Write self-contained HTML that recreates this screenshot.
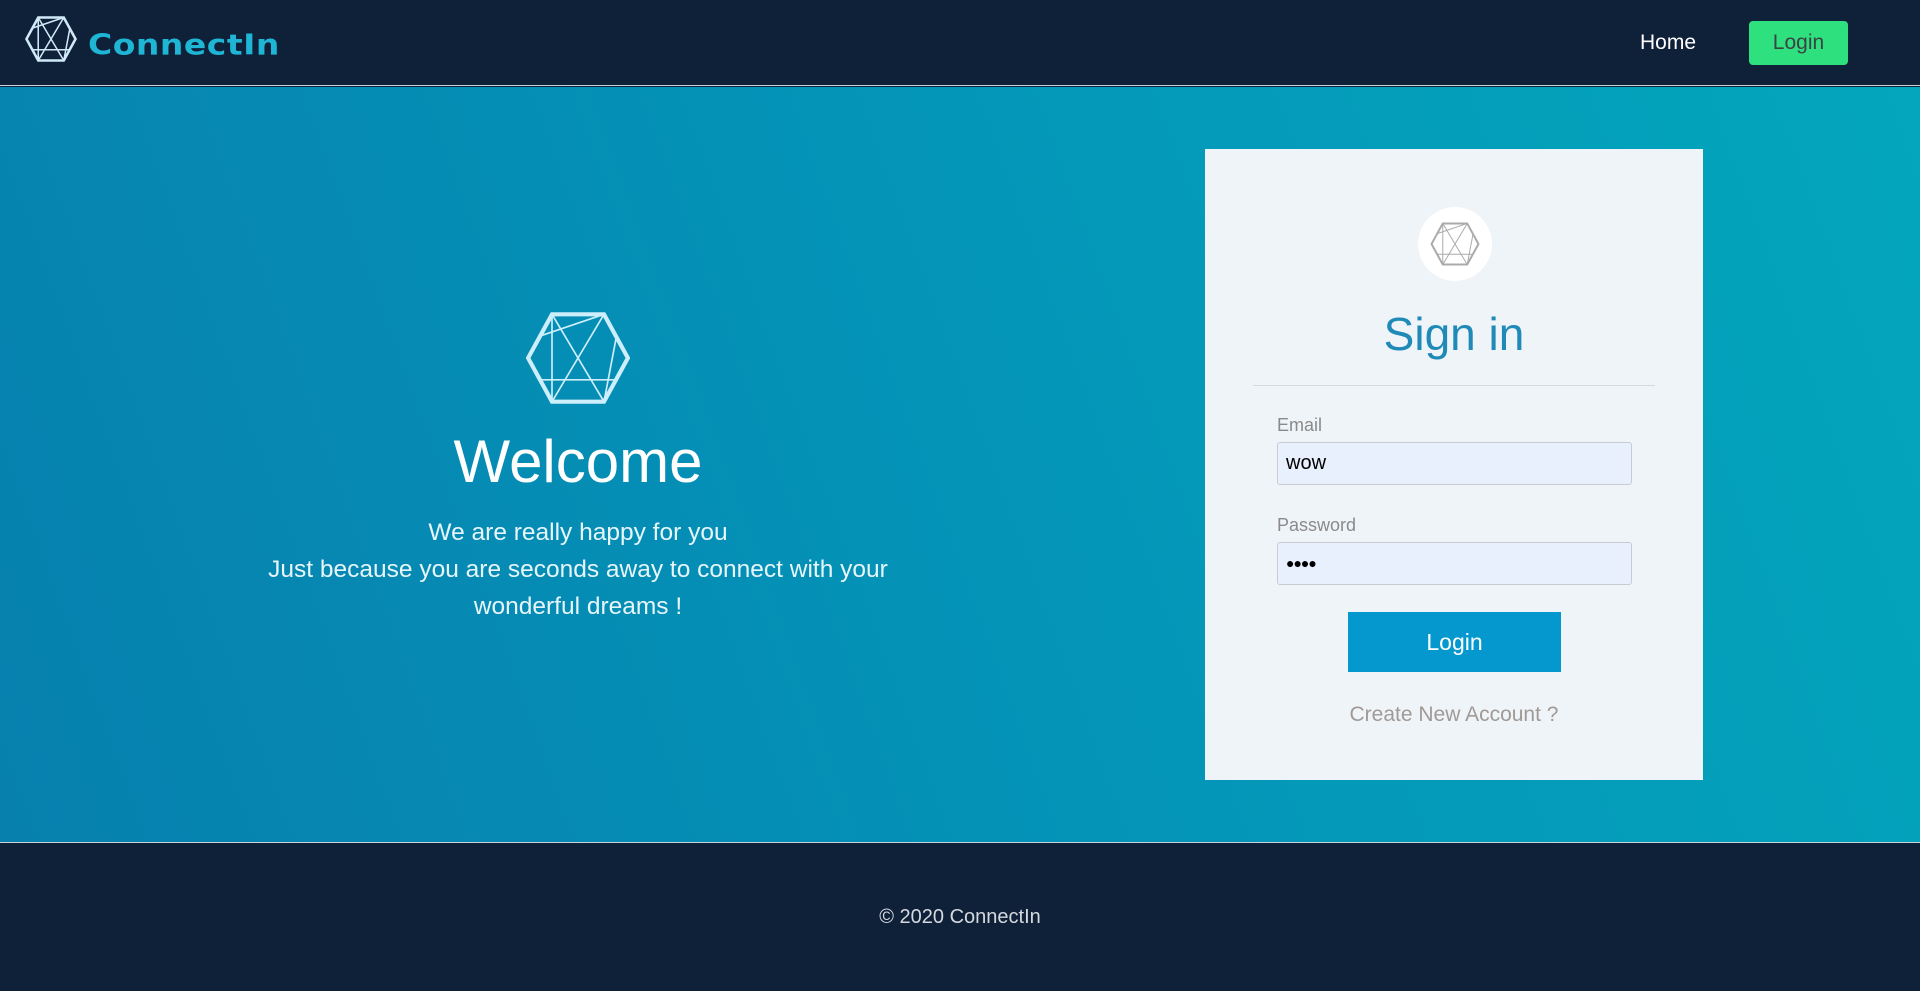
<!DOCTYPE html>
<html><head><meta charset="utf-8"><style>
*{margin:0;padding:0;box-sizing:border-box}
body{width:1920px;height:991px;overflow:hidden;font-family:"Liberation Sans",sans-serif;background:#0f2039;position:relative}
.hdr{position:absolute;left:0;top:0;width:1920px;height:86px;background:#0f2039;border-bottom:1px solid #c9d3dc}
.main{position:absolute;left:0;top:87px;width:1920px;height:756px;background:linear-gradient(70deg,#0780ae 0%,#0494b8 50%,#03a6bc 100%);border-bottom:1px solid #c9d3dc}
.ftr{position:absolute;left:0;top:844px;width:1920px;height:147px;background:#0f2039}
.abs{position:absolute}
</style></head><body>
<div class="hdr">
<svg class="abs" style="left:25px;top:16px" width="52" height="46" viewBox="0 0 100 90"><g fill="none" stroke="#cfe9f7" stroke-width="3"><polygon points="25,3 75,3 98,45 75,87 25,87 2,45" stroke-width="5"/><path d="M25,3 L75,87 M75,3 L25,87 M25,3 L25,87 M75,3 L13,24 M87,24 L75,87 M13,66 L87,66"/></g></svg>
<div class="abs" style="left:88px;top:28px;font-size:33px;color:#1fb6d6;letter-spacing:0.5px;font-family:'DejaVu Sans',sans-serif;font-weight:bold;transform:scaleY(0.85);transform-origin:left top">ConnectIn</div>
<div class="abs" style="left:1640px;top:31px;font-size:21px;color:#fff">Home</div>
<div class="abs" style="left:1749px;top:21px;width:99px;height:44px;background:#2ee07e;border-radius:4px;color:#3a4444;font-size:21px;text-align:center;line-height:44px">Login</div>
</div>
<div class="main">
<svg class="abs" style="left:526px;top:224px" width="104" height="94" viewBox="0 0 100 90"><g fill="none" stroke="#cdeefb" stroke-width="1.6"><polygon points="25,3 75,3 98,45 75,87 25,87 2,45" stroke-width="4"/><path d="M25,3 L75,87 M75,3 L25,87 M25,3 L25,87 M75,3 L13,24 M87,24 L75,87 M13,66 L87,66"/></g></svg>
<div class="abs" style="left:278px;top:340px;width:600px;text-align:center;font-size:60px;color:#fff">Welcome</div>
<div class="abs" style="left:178px;top:427px;width:800px;text-align:center;font-size:24.5px;line-height:37px;color:#e6f6fb">We are really happy for you<br>Just because you are seconds away to connect with your<br>wonderful dreams !</div>
<div class="abs" style="left:1205px;top:62px;width:498px;height:631px;background:#eff4f9">
<div class="abs" style="left:213px;top:58px;width:74px;height:74px;border-radius:50%;background:#fff"></div>
<svg class="abs" style="left:225px;top:73px" width="50" height="44" viewBox="0 0 100 90"><g fill="none" stroke="#aaa" stroke-width="2"><polygon points="25,3 75,3 98,45 75,87 25,87 2,45" stroke-width="4"/><path d="M25,3 L75,87 M75,3 L25,87 M25,3 L25,87 M75,3 L13,24 M87,24 L75,87 M13,66 L87,66"/></g></svg>
<div class="abs" style="left:0;top:158px;width:498px;text-align:center;font-size:46px;color:#1f8ab8">Sign in</div>
<div class="abs" style="left:48px;top:236px;width:402px;height:1px;background:#d5d9de"></div>
<div class="abs" style="left:72px;top:266px;font-size:18px;color:#8a8a8a">Email</div>
<div class="abs" style="left:72px;top:293px;width:355px;height:43px;background:#e8f0fe;border:1px solid #c8ccd0;border-radius:3px;font-size:20px;line-height:41px;padding-left:8px;color:#000">wow</div>
<div class="abs" style="left:72px;top:366px;font-size:18px;color:#8a8a8a">Password</div>
<div class="abs" style="left:72px;top:393px;width:355px;height:43px;background:#e8f0fe;border:1px solid #c8ccd0;border-radius:3px;font-size:14px;line-height:41px;padding-left:8px;color:#000;letter-spacing:-1px">●●●●</div>
<div class="abs" style="left:143px;top:463px;width:213px;height:60px;background:#0498cf;color:#fff;font-size:23px;text-align:center;line-height:60px">Login</div>
<div class="abs" style="left:0;top:554px;width:498px;text-align:center;font-size:21px;color:#a09a96">Create New Account ?</div>
</div>
</div>
<div class="ftr"><div class="abs" style="left:0;top:62px;width:1920px;text-align:center;font-size:20px;color:#d5d9de">© 2020 ConnectIn</div></div>
</body></html>
